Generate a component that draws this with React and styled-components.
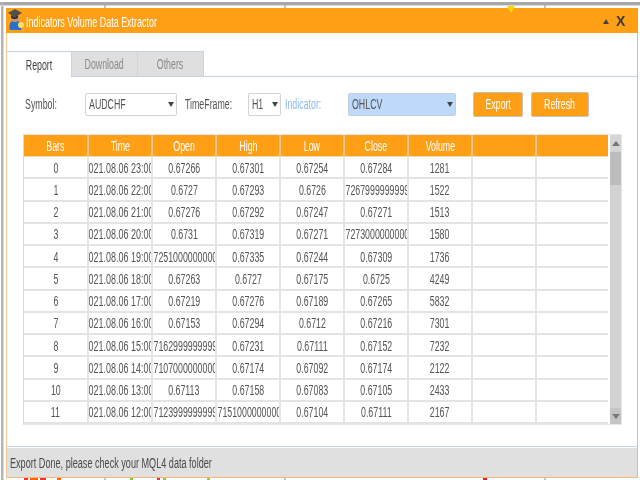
import React from "react";
import styled, { createGlobalStyle } from "styled-components";

const Global = createGlobalStyle`
  html, body { margin: 0; padding: 0; width: 640px; height: 480px; overflow: hidden; background: #fff; }
  body { font-family: "Liberation Sans", Arial, sans-serif; }
  #root { width: 640px; height: 480px; }
`;

const Desktop = styled.div`
  position: relative;
  width: 640px;
  height: 480px;
  overflow: hidden;
  background: #fff;
  filter: blur(0.35px);
`;
const ChartSvg = styled.svg`
  position: absolute;
  inset: 0;
`;
const Marker = styled.div`
  position: absolute;
  left: 507px;
  top: 6px;
  width: 0;
  height: 0;
  border-left: 4px solid transparent;
  border-right: 4px solid transparent;
  border-top: 7px solid #f7d900;
`;
const Window = styled.div`
  position: absolute;
  left: 6px;
  top: 8px;
  width: 632px;
  height: 470px;
  box-sizing: border-box;
  display: flex;
  flex-direction: column;
  background: #fff;
  border-left: 1px solid #f8c594;
  border-right: 1px solid #f3b583;
  border-bottom: 1px solid #f6b878;
`;
const Squeezed = styled.span`
  display: inline-block;
  flex: none;
  white-space: nowrap;
  transform: scaleX(${(p) => p.$x || 0.63});
  transform-origin: ${(p) => p.$origin || "center"};
`;
const TitleBar = styled.div`
  flex: none;
  height: 25px;
  margin-left: -1px;
  margin-right: -1px;
  background: #ff9f16;
  display: flex;
  align-items: center;
  padding: 0 13px 0 2px;
  color: #fff;
  font-size: 14px;
`;
const Logo = styled.svg`
  flex: none;
  width: 16px;
  height: 22px;
  margin-right: 2px;
  margin-top: -3px;
`;
const TitleText = styled.div`
  flex: 1;
  margin-top: 2px;
  height: 16px;
  line-height: 16px;
`;
const Collapse = styled.div`
  width: 0;
  height: 0;
  border-left: 3px solid transparent;
  border-right: 3px solid transparent;
  border-bottom: 5px solid #444;
  margin-right: 7px;
  margin-top: 2px;
`;
const Close = styled.div`
  color: #3a3a3a;
  font-size: 14px;
  font-weight: bold;
  width: 9px;
  line-height: 14px;
`;
const Body = styled.div`
  flex: 1;
  min-height: 0;
  padding-top: 18px;
  display: flex;
  flex-direction: column;
  border-bottom: 1px solid #c3d4ec;
`;
const Tabs = styled.div`
  flex: none;
  height: 25px;
  display: flex;
  border-bottom: 1px solid #c3d4ec;
  position: relative;
`;
const Tab = styled.div`
  box-sizing: border-box;
  width: ${(p) => p.$w}px;
  height: ${(p) => (p.$active ? 26 : 25)}px;
  display: flex;
  align-items: center;
  justify-content: center;
  font-size: 14px;
  color: ${(p) => (p.$active ? "#444" : "#8a8a8a")};
  background: ${(p) => (p.$active ? "#fff" : "#dfdfdf")};
  border-top: 1px solid #c3d4ec;
  border-right: 1px solid #c3d4ec;
`;
const Toolbar = styled.div`
  flex: none;
  height: 26px;
  margin-top: 14px;
  display: flex;
  align-items: center;
  font-size: 14px;
  color: #555;
`;
const Label = styled.div`
  width: ${(p) => p.$w}px;
  margin-left: ${(p) => p.$ml}px;
  flex: none;
  color: ${(p) => p.$color || "#555"};
`;
const Select = styled.div`
  box-sizing: border-box;
  width: ${(p) => p.$w}px;
  margin-left: ${(p) => p.$ml || 0}px;
  height: 23px;
  flex: none;
  display: flex;
  align-items: center;
  justify-content: space-between;
  padding: 0 2px 0 3px;
  border: 1px solid ${(p) => (p.$blue ? "#c4cfdd" : "#d4d4d4")};
  border-radius: 2px;
  background: ${(p) => (p.$blue ? "#bfd9fb" : "#fff")};
  overflow: hidden;
`;
const Caret = styled.div`
  flex: none;
  width: 0;
  height: 0;
  border-left: 3px solid transparent;
  border-right: 3px solid transparent;
  border-top: 5px solid #444;
`;
const Button = styled.div`
  box-sizing: border-box;
  width: ${(p) => p.$w}px;
  margin-left: ${(p) => p.$ml}px;
  height: 25px;
  flex: none;
  display: flex;
  align-items: center;
  justify-content: center;
  background: #ff9f16;
  color: #fff;
  font-size: 14px;
  border: 1px solid #c9c2b8;
  border-radius: 2px;
`;
const TableArea = styled.div`
  flex: none;
  margin: 17px 0 0 16px;
  width: 599px;
  display: flex;
  box-sizing: border-box;
  border: 1px solid #e6e6e6;
  border-left: 1px solid #dcdcdc;
`;
const Grid = styled.div`
  width: 584px;
  flex: none;
`;
const Row = styled.div`
  display: grid;
  grid-template-columns: 65px 64px 64px 64px 64px 64px 64px 64px 71px;
  height: ${(p) => (p.$head ? 22 : 22.25)}px;
  box-sizing: border-box;
  border-bottom: 2px solid #e4e4e4;
  background: #fff;
  ${(p) => p.$head && "border-bottom: 1px solid #f0d9b8; background: #ff9f16; color: #fff;"}
`;
const Cell = styled.div`
  box-sizing: border-box;
  overflow: hidden;
  display: flex;
  align-items: center;
  justify-content: center;
  font-size: 14px;
  padding-top: ${(p) => (p.$head ? 0 : 1)}px;
  padding-right: ${(p) => (p.$nudge ? 3 : 0)}px;
  color: ${(p) => (p.$head ? "#fff" : "#555")};
  border-right: 2px solid ${(p) => (p.$head ? "#f4c88c" : "#e6e6e6")};
  &:last-child { border-right: none; }
`;
const Scrollbar = styled.div`
  width: 11px;
  margin-left: 2px;
  flex: none;
  display: flex;
  flex-direction: column;
  background: #d2d2d2;
`;
const ScrollBtn = styled.div`
  flex: none;
  height: 16px;
  display: flex;
  align-items: center;
  justify-content: center;
  background: #d6d6d6;
  ${(p) => p.$down && "background: #c4c4c4;"}
`;
const Arrow = styled.div`
  width: 0;
  height: 0;
  border-left: 4px solid transparent;
  border-right: 4px solid transparent;
  ${(p) => (p.$down ? "border-top: 5px solid #777;" : "border-bottom: 5px solid #777;")}
`;
const Thumb = styled.div`
  flex: none;
  height: 33px;
  margin-top: 1px;
  background: #bcbcbc;
`;
const Track = styled.div`
  flex: 1;
`;
const StatusBar = styled.div`
  flex: none;
  height: 29px;
  margin-top: 1px;
  background: #e0e0e0;
  display: flex;
  align-items: center;
  padding-left: 3px;
  font-size: 14px;
  color: #4a4a4a;
`;

const LONG = {
  a: "0.6725100000000000",
  b: "0.6726799999999999",
  c: "0.6727300000000000",
  d: "0.6716299999999999",
  e: "0.6710700000000000",
  f: "0.6712399999999999",
  g: "0.6715100000000000",
};
const rows = [
  ["0", "2021.08.06 23:00", "0.67266", "0.67301", "0.67254", "0.67284", "1281"],
  ["1", "2021.08.06 22:00", "0.6727", "0.67293", "0.6726", LONG.b, "1522"],
  ["2", "2021.08.06 21:00", "0.67276", "0.67292", "0.67247", "0.67271", "1513"],
  ["3", "2021.08.06 20:00", "0.6731", "0.67319", "0.67271", LONG.c, "1580"],
  ["4", "2021.08.06 19:00", LONG.a, "0.67335", "0.67244", "0.67309", "1736"],
  ["5", "2021.08.06 18:00", "0.67263", "0.6727", "0.67175", "0.6725", "4249"],
  ["6", "2021.08.06 17:00", "0.67219", "0.67276", "0.67189", "0.67265", "5832"],
  ["7", "2021.08.06 16:00", "0.67153", "0.67294", "0.6712", "0.67216", "7301"],
  ["8", "2021.08.06 15:00", LONG.d, "0.67231", "0.67111", "0.67152", "7232"],
  ["9", "2021.08.06 14:00", LONG.e, "0.67174", "0.67092", "0.67174", "2122"],
  ["10", "2021.08.06 13:00", "0.67113", "0.67158", "0.67083", "0.67105", "2433"],
  ["11", "2021.08.06 12:00", LONG.f, LONG.g, "0.67104", "0.67111", "2167"],
];
const heads = ["Bars", "Time", "Open", "High", "Low", "Close", "Volume", "", ""];

function Background() {
  return (
    <ChartSvg width="640" height="480" viewBox="0 0 640 480">
      <rect x="0" y="2" width="640" height="3" fill="#a8a8a8" />
      <rect x="1" y="2" width="2" height="478" fill="#b4b4b4" />
      <rect x="3" y="5" width="1" height="475" fill="#dcdcdc" />
      <rect x="0" y="5" width="640" height="1" fill="#d8d8d8" />
      <path d="M105 5v3M285 5v3M545 5v3" stroke="#888" />
      <path d="M105 478v2M285 478v2M545 478v2" stroke="#888" />
      <rect x="24" y="478" width="4" height="2" fill="#e33" />
      <rect x="30" y="478" width="8" height="2" fill="#f60" />
      <rect x="40" y="478" width="6" height="2" fill="#e33" />
      <rect x="57" y="478" width="4" height="2" fill="#f60" />
      <rect x="130" y="478" width="3" height="2" fill="#8c3" />
      <rect x="157" y="478" width="3" height="2" fill="#e33" />
      <rect x="163" y="478" width="3" height="2" fill="#9c3" />
      <rect x="207" y="478" width="3" height="2" fill="#9c3" />
      <rect x="483" y="478" width="4" height="2" fill="#d22" />
    </ChartSvg>
  );
}

function GradIcon() {
  return (
    <Logo viewBox="0 0 16 22">
      <path d="M4 13c-3 2-3 7-2 9h11c1-3 0-7-3-9z" fill="#2a6fc9" />
      <circle cx="7" cy="10" r="4" fill="#c9986a" />
      <path d="M0 5l7-4 7 4-7 4z" fill="#4f4f4f" />
      <path d="M3 7v3c2 1.500 5 1.500 7 0V7l-3 2z" fill="#333" />
      <circle cx="13" cy="17" r="3" fill="#f5e06a" />
    </Logo>
  );
}

export default function App() {
  return (
    <>
      <Global />
      <Desktop>
        <Background />
        <Window>
          <TitleBar>
            <GradIcon />
            <TitleText><Squeezed $x={0.64} $origin="left">Indicators Volume Data Extractor</Squeezed></TitleText>
            <Collapse />
            <Close>X</Close>
          </TitleBar>
          <Body>
            <Tabs>
              <Tab $w={65} $active><Squeezed>Report</Squeezed></Tab>
              <Tab $w={66}><Squeezed>Download</Squeezed></Tab>
              <Tab $w={66}><Squeezed>Others</Squeezed></Tab>
            </Tabs>
            <Toolbar>
              <Label $w={60} $ml={18}><Squeezed $origin="left">Symbol:</Squeezed></Label>
              <Select $w={92}><Squeezed $origin="left">AUDCHF</Squeezed><Caret /></Select>
              <Label $w={62} $ml={8}><Squeezed $origin="left">TimeFrame:</Squeezed></Label>
              <Select $w={33} $ml={1}><Squeezed $origin="left">H1</Squeezed><Caret /></Select>
              <Label $w={63} $ml={4} $color="#8db9f2"><Squeezed $origin="left">Indicator:</Squeezed></Label>
              <Select $w={108} $blue><Squeezed $origin="left">OHLCV</Squeezed><Caret /></Select>
              <Button $w={50} $ml={17}><Squeezed>Export</Squeezed></Button>
              <Button $w={58} $ml={8}><Squeezed>Refresh</Squeezed></Button>
            </Toolbar>
            <TableArea>
              <Grid>
                <Row $head>
                  {heads.map((h, i) => (
                    <Cell key={i} $head><Squeezed>{h}</Squeezed></Cell>
                  ))}
                </Row>
                {rows.map((r) => (
                  <Row key={r[0]}>
                    {r.map((c, i) => (
                      <Cell key={i} $nudge={i === 1}><Squeezed $x={i === 1 ? 0.64 : undefined}>{c}</Squeezed></Cell>
                    ))}
                    <Cell />
                    <Cell />
                  </Row>
                ))}
              </Grid>
              <Scrollbar>
                <ScrollBtn><Arrow /></ScrollBtn>
                <Thumb />
                <Track />
                <ScrollBtn $down><Arrow $down /></ScrollBtn>
              </Scrollbar>
            </TableArea>
          </Body>
          <StatusBar><Squeezed $x={0.65} $origin="left">Export Done, please check your MQL4 data folder</Squeezed></StatusBar>
        </Window>
        <Marker />
      </Desktop>
    </>
  );
}
